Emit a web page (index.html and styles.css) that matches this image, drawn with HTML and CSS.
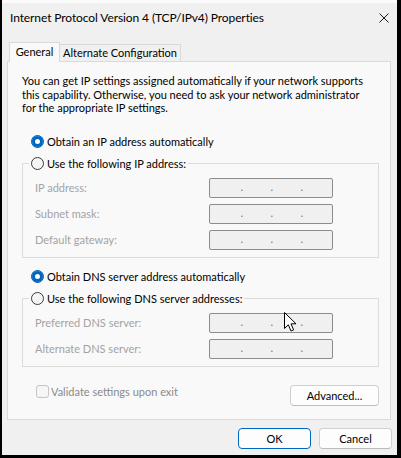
FILE: index.html
```html
<!DOCTYPE html>
<html lang="en">
<head>
  <meta charset="UTF-8" />
  <title>Internet Protocol Version 4 (TCP/IPv4) Properties</title>
  <link rel="stylesheet" href="styles.css">
</head>
<body>
  <div class="behind"><span>Select value:</span></div>
  <div class="dialog">
    <div class="titlebar">
      <span class="title">Internet Protocol Version 4 (TCP/IPv4) Properties</span>
      <svg class="close" width="10" height="10" viewBox="0 0 10 10">
        <path d="M0.5 0.5 L9.5 9.5 M9.5 0.5 L0.5 9.5" stroke="#1a1a1a" stroke-width="1" fill="none"/>
      </svg>
    </div>

    <div class="tabs">
      <div class="tab active">General</div>
      <div class="tab">Alternate Configuration</div>
    </div>

    <div class="panel">
      <p class="intro">You can get IP settings assigned automatically if your network supports this capability. Otherwise, you need to ask your network administrator for the appropriate IP settings.</p>

      <label class="radio on top-radio"><span class="dot"></span>Obtain an IP address automatically</label>
      <fieldset class="group">
        <legend><label class="radio"><span class="dot"></span>Use the following IP address:</label></legend>
        <div class="row"><span class="lbl">IP address:</span><div class="ip"><span>.</span><span>.</span><span>.</span></div></div>
        <div class="row"><span class="lbl">Subnet mask:</span><div class="ip"><span>.</span><span>.</span><span>.</span></div></div>
        <div class="row"><span class="lbl">Default gateway:</span><div class="ip"><span>.</span><span>.</span><span>.</span></div></div>
      </fieldset>

      <label class="radio on mid-radio"><span class="dot"></span>Obtain DNS server address automatically</label>
      <fieldset class="group dns">
        <legend><label class="radio"><span class="dot"></span>Use the following DNS server addresses:</label></legend>
        <div class="row"><span class="lbl">Preferred DNS server:</span><div class="ip"><span>.</span><span>.</span><span>.</span></div></div>
        <div class="row"><span class="lbl">Alternate DNS server:</span><div class="ip"><span>.</span><span>.</span><span>.</span></div></div>
      </fieldset>

      <div class="bottom-row">
        <label class="check"><span class="box"></span>Validate settings upon exit</label>
        <button class="btn advanced">Advanced...</button>
      </div>
    </div>

    <div class="footer">
      <button class="btn primary">OK</button>
      <button class="btn">Cancel</button>
    </div>

    <svg class="cursor" width="14" height="21" viewBox="0 0 14 21">
      <path d="M0.5 0.5 L0.5 16.5 L4.3 12.8 L7 19 L9.6 17.9 L7 11.8 L12 11.8 Z" fill="#fff" stroke="#000" stroke-width="1" stroke-linejoin="round"/>
    </svg>
  </div>
</body>
</html>
```

FILE: styles.css
```css
* {
  box-sizing: border-box;
}
body {
  margin: 0;
  width: 401px;
  height: 458px;
  overflow: hidden;
  background: #000;
  font-family: 'Lato', 'Liberation Sans', sans-serif;
  font-size: 11px;
  color: #000;
}
.behind {
  height: 3px;
  margin: 0 4px 0 2px;
  background: #fbfbfb;
  overflow: hidden;
  padding-left: 10px;
}
.behind span {
  display: block;
  margin-top: -10px;
  line-height: 12px;
  color: #333;
}
.dialog {
  position: relative;
  margin: 0 4px 0 2px;
  height: 452px;
  background: #f0f0f0;
}
.titlebar {
  height: 39px;
  display: flex;
  align-items: flex-start;
  padding: 7px 8px 0 8px;
}
.title {
  font-size: 12px;
  letter-spacing: -0.1px;
  line-height: 16px;
}
.close {
  margin-left: auto;
  margin-top: 3px;
}
.tabs {
  display: flex;
  align-items: flex-end;
  height: 19px;
  padding-left: 7px;
  position: relative;
  z-index: 1;
}
.tab {
  height: 17px;
  width: 121px;
  line-height: 16px;
  text-align: center;
  white-space: nowrap;
  border: 1px solid #d9d9d9;
  border-left: none;
  border-bottom: none;
  background: #f0f0f0;
}
.tab.active {
  width: 51px;
  height: 20px;
  margin-bottom: -1px;
  line-height: 18px;
  border-left: 1px solid #d9d9d9;
  background: #f9f9f9;
}
.panel {
  margin-left: 5px;
  width: 384px;
  height: 359px;
  border: 1px solid #dadada;
  background: #f9f9f9;
}
.intro {
  margin: 12px 0 0 14px;
  width: 346px;
  line-height: 13.5px;
}
.radio {
  display: flex;
  align-items: center;
  height: 16px;
  line-height: 16px;
  white-space: nowrap;
}
.top-radio,
.mid-radio {
  margin-left: 23px;
}
.top-radio {
  margin-top: 19px;
}
.mid-radio {
  margin-top: 11px;
}
.dot {
  width: 13px;
  height: 13px;
  border-radius: 50%;
  border: 1px solid #3c3c3c;
  background: #f4f4f4;
  margin-right: 3px;
  flex-shrink: 0;
}
.radio.on .dot {
  border-color: #0067c0;
  background: #0067c0;
  box-shadow: inset 0 0 0 3px #0067c0, inset 0 0 0 6px #fff;
}
.group {
  margin: 6px 0 0 14px;
  width: 357px;
  padding: 6px 0 7px 12px;
  border: 1px solid #dcdcdc;
  min-width: 0;
}
.group legend {
  padding: 0 2px;
  margin-left: -6px;
}
.row {
  display: grid;
  grid-template-columns: 174px 124px;
  align-items: center;
  height: 20px;
  margin-bottom: 6px;
}
.row:last-child {
  margin-bottom: 0;
}
.lbl {
  color: #a3a3a3;
}
.ip {
  height: 20px;
  border: 1px solid #8c8c8c;
  border-radius: 2px;
  background: #f0f0f0;
  display: grid;
  grid-template-columns: repeat(3, 30px);
  padding-left: 3px;
  line-height: 20px;
  color: #6f7590;
}
.ip span {
  justify-self: end;
  margin-top: -2px;
}
.bottom-row {
  display: flex;
  align-items: flex-start;
  margin: 18px 11px 0 28px;
}
.check {
  display: flex;
  align-items: center;
  height: 13px;
  color: #8a8a8a;
}
.box {
  width: 13px;
  height: 13px;
  border: 1px solid #c4c4c4;
  border-radius: 3px;
  background: #f6f6f6;
  margin-right: 2px;
}
.btn {
  font-family: inherit;
  font-size: 11px;
  color: #000;
  height: 21px;
  width: 73px;
  padding: 0;
  border: 1px solid #d0d0d0;
  border-bottom-color: #bcbcbc;
  border-radius: 4px;
  background: #fdfdfd;
}
.advanced {
  width: 89px;
  margin-left: auto;
}
.footer {
  display: flex;
  justify-content: flex-end;
  gap: 8px;
  margin-top: 8px;
  padding-right: 5px;
}
.btn.primary {
  border: 1px solid #0067c0;
}
.cursor {
  position: absolute;
  left: 282px;
  top: 309px;
}
```
